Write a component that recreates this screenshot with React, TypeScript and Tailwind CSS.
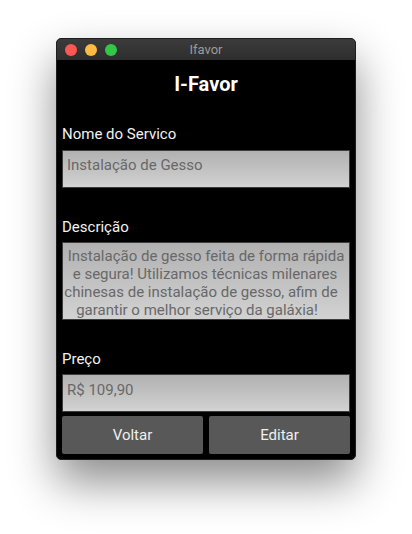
import React from "react";

const font = { fontFamily: "Roboto, 'Noto Sans', sans-serif" };

const Field: React.FC<{ children: React.ReactNode; className?: string }> = ({ children, className }) => (
  <div
    className={
      "border border-[#3d3d3d] bg-gradient-to-b from-[#b1b1b1] to-[#d2d2d2] text-[15px] leading-[18px] text-[#686868] " +
      (className || "")
    }
  >
    {children}
  </div>
);

const App: React.FC = () => {
  return (
    <div className="w-[412px] h-[534px] bg-white pt-[38px]" style={font}>
      <div className="mx-auto w-[300px] h-[422px] rounded-[5px] bg-black border border-[#1e1e1e] flex flex-col overflow-hidden shadow-[0_22px_45px_rgba(0,0,0,0.45)]">
        {/* title bar */}
        <div className="relative h-[21px] bg-gradient-to-b from-[#3b3b3b] to-[#2e2e2e] flex items-center justify-center">
          <div className="absolute left-[8px] top-[5px] flex gap-[8px]">
            <span className="w-[12px] h-[12px] rounded-full bg-[#fc5753]" />
            <span className="w-[12px] h-[12px] rounded-full bg-[#fdbc40]" />
            <span className="w-[12px] h-[12px] rounded-full bg-[#33c748]" />
          </div>
          <span className="text-[13px] text-[#9b9b9b]">Ifavor</span>
        </div>

        <div className="flex flex-col px-[5px] pb-[5px] text-white">
          <h1 className="mt-[12px] text-center text-[20px] leading-[24px] font-bold">I-Favor</h1>

          <div className="mt-[28px] text-[15px] leading-[20px] text-[#f2f2f2]">Nome do Servico</div>
          <Field className="mt-[6px] h-[38px] pl-[4px] pt-[5px]">Instalação de Gesso</Field>

          <div className="mt-[29px] text-[15px] leading-[20px] text-[#f2f2f2]">Descrição</div>
          <Field className="mt-[5px] h-[78px] pt-[4px] text-center">
            <div>Instalação de gesso feita de forma rápida</div>
            <div className="pr-[2px]">e segura! Utilizamos técnicas milenares</div>
            <div className="pr-[10px]">chinesas de instalação de gesso, afim de</div>
            <div className="pr-[18px]">garantir o melhor serviço da galáxia!</div>
          </Field>

          <div className="mt-[29px] text-[15px] leading-[20px] text-[#f2f2f2]">Preço</div>
          <Field className="mt-[5px] h-[38px] pl-[4px] pt-[6px]">R$ 109,90</Field>

          <div className="mt-[4px] grid grid-cols-2 gap-[6px]">
            <button className="h-[38px] rounded-[2px] bg-[#585858] text-[15px] text-[#efefef]">Voltar</button>
            <button className="h-[38px] rounded-[2px] bg-[#585858] text-[15px] text-[#efefef]">Editar</button>
          </div>
        </div>
      </div>
    </div>
  );
};

export default App;
